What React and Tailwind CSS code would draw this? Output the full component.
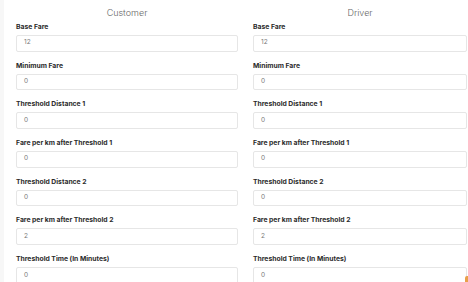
const fields = [
  { label: "Base Fare", value: "12" },
  { label: "Minimum Fare", value: "0" },
  { label: "Threshold Distance 1", value: "0" },
  { label: "Fare per km after Threshold 1", value: "0" },
  { label: "Threshold Distance 2", value: "0" },
  { label: "Fare per km after Threshold 2", value: "2" },
  { label: "Threshold Time (In Minutes)", value: "0" },
];

const Column = ({ title, className }) => (
  <div className={className}>
    <div className="pt-[5.5px] mb-[2.5px] text-center text-[9px] leading-[14px] font-light text-[#666]">
      {title}
    </div>
    {fields.map((f) => (
      <div key={f.label} className="mb-[9.2px]">
        <div className="text-[6.8px] leading-[10px] font-bold text-[#2b2b2b] mb-[3px]">{f.label}</div>
        <div className="h-[16.5px] border border-[#e6e6e6] rounded-[2px] bg-white pl-[7px] flex items-center text-[6.5px] text-[#777]">
          {f.value}
        </div>
      </div>
    ))}
  </div>
);

const App = () => {
  return (
    <div
      className="relative w-[468px] h-[282px] overflow-hidden bg-white flex"
      style={{ fontFamily: "Inter, 'Noto Sans', sans-serif" }}
    >
      <div className="w-[4px] bg-[#f7f7f7] shrink-0" />
      <div className="flex flex-1 pl-[12px] pr-[1px] gap-[15px]">
        <Column title="Customer" className="w-[222px] shrink-0" />
        <Column title="Driver" className="flex-1" />
      </div>
      <div className="absolute right-0 bottom-0 w-[3px] h-[6px] rounded-tl-[2px] bg-[#e9a04a]" />
    </div>
  );
};

export default App;
